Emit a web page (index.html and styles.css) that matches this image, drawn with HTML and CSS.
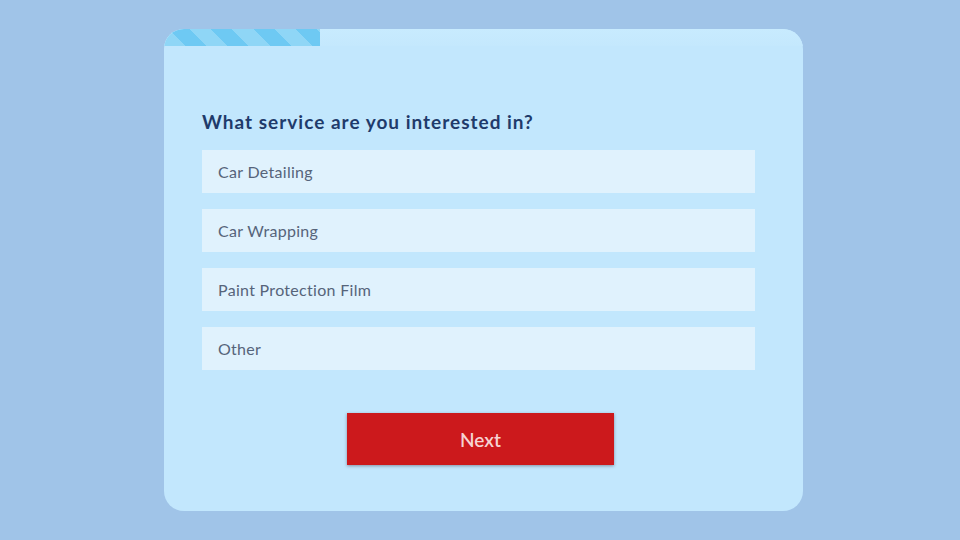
FILE: index.html
```html
<!DOCTYPE html>
<html>
<head>
<meta charset="utf-8">
<link rel="stylesheet" href="styles.css">
</head>
<body>
<div class="card">
  <div class="track"><div class="progress"></div></div>
  <div class="content">
    <h2 class="question">What service are you interested in?</h2>
    <div class="options">
      <div class="option">Car Detailing</div>
      <div class="option">Car Wrapping</div>
      <div class="option">Paint Protection Film</div>
      <div class="option">Other</div>
    </div>
    <div class="actions"><button class="next">Next</button></div>
  </div>
</div>
</body>
</html>
```
FILE: styles.css
```css
html, body { margin: 0; padding: 0; }
body {
  width: 960px; height: 540px;
  background: #a0c4e8;
  font-family: Lato, "Open Sans", sans-serif;
  overflow: hidden;
}
.card {
  margin: 29px 0 0 164px;
  width: 639px; height: 482px;
  background: #c2e7fd;
  border-radius: 20px;
  overflow: hidden;
  box-sizing: border-box;
}
.track {
  height: 17px;
  background: linear-gradient(#c8ebfe, #c4e8fd);
}
.progress {
  width: 156px; height: 17px;
  background: repeating-linear-gradient(45deg, #8fd6f6 0 15px, #6ec9f3 15px 30px);
}
.content {
  padding: 64px 48px 0 38px;
}
.question {
  margin: 0 0 16px 0;
  font-size: 19px;
  line-height: 24px;
  font-weight: 700;
  color: #1f3b6b;
  letter-spacing: 1px;
}
.options { display: flex; flex-direction: column; gap: 16px; }
.option {
  height: 43px;
  background: #e0f2fd;
  box-sizing: border-box;
  padding-left: 16px;
  display: flex; align-items: center;
  font-size: 16px;
  letter-spacing: 0.3px;
  color: #56647a;
}
.actions { display: flex; justify-content: center; padding-top: 43px; padding-left: 4px; }
.next {
  width: 267px; height: 52px;
  border: none;
  background: #cc191c;
  color: #f6d3d3;
  font-family: Lato, "Open Sans", sans-serif;
  font-size: 19px;
  font-weight: 600;
  box-shadow: 0 1px 3px rgba(60, 40, 60, 0.45);
}
```
